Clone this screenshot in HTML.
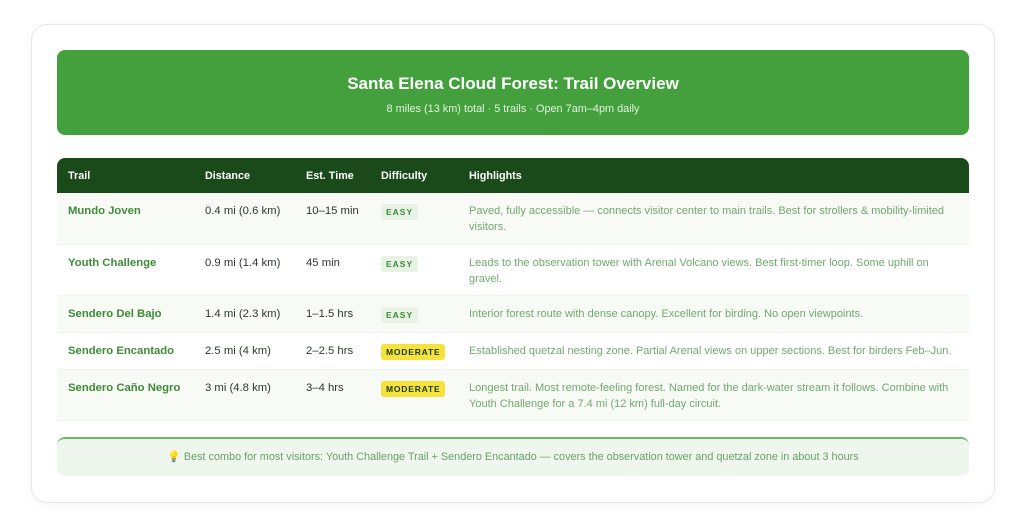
<!DOCTYPE html>
<html><head><meta charset="utf-8"><style>
*{margin:0;padding:0;box-sizing:border-box}
body{width:1024px;height:528px;background:#fff;font-family:"Liberation Sans",sans-serif;position:relative;overflow:hidden}
.card{position:absolute;left:31px;top:24px;width:964px;height:479px;border:1px solid #e4ece2;border-radius:16px;background:#fff;box-shadow:0 2px 10px rgba(0,0,0,.04)}
.hero{position:absolute;left:57px;top:50px;width:912px;height:85px;background:#43a03d;border-radius:8px;color:#fff;text-align:center}
.hero h1{font-size:17px;font-weight:bold;margin-top:24px}
.hero p{font-size:10.9px;margin-top:9px;color:#e3f3df}
.th{position:absolute;left:57px;top:158px;width:912px;height:35px;background:#1b4a1a;border-radius:8px 8px 0 0;color:#fff;font-size:10.8px;font-weight:bold}
.c{position:absolute}
.row{position:absolute;left:57px;width:912px;border-bottom:1px solid #eef3ec;font-size:11.3px}
.alt{background:#f7faf5}
.name{color:#3d8b37;font-weight:bold}
.dk{color:#2a3a2a}
.hl{color:#72a870;font-size:11px;line-height:16px;width:485px}
.b{position:absolute;left:324px;font-size:8.5px;font-weight:bold;letter-spacing:1px;padding:3px 5px;border-radius:3px}
.easy{background:#e8f3e6;color:#3d8b37}
.mod{background:#f5e33c;color:#1b3a1a;letter-spacing:.8px}
.foot{position:absolute;left:57px;top:437px;width:912px;height:39px;background:#eff6ed;border-top:2px solid #6bb865;border-radius:8px;text-align:center;font-size:10.85px;color:#6aa168;line-height:37px}
</style></head><body>
<div class="card"></div>
<div class="hero"><h1>Santa Elena Cloud Forest: Trail Overview</h1><p>8 miles (13 km) total · 5 trails · Open 7am–4pm daily</p></div>
<div class="th">
<span class="c" style="left:11px;top:12px">Trail</span>
<span class="c" style="left:148px;top:12px">Distance</span>
<span class="c" style="left:249px;top:12px">Est. Time</span>
<span class="c" style="left:324px;top:12px">Difficulty</span>
<span class="c" style="left:412px;top:12px">Highlights</span>
</div>

<div class="row alt" style="top:193px;height:52px">
<span class="c name" style="left:11px;top:12px">Mundo Joven</span>
<span class="c dk" style="left:148px;top:12px">0.4 mi (0.6 km)</span>
<span class="c dk" style="left:249px;top:12px">10–15 min</span>
<span class="b easy" style="top:11px">EASY</span>
<span class="c hl" style="left:412px;top:10px">Paved, fully accessible — connects visitor center to main trails. Best for strollers &amp; mobility-limited visitors.</span>
</div>
<div class="row" style="top:245px;height:51px">
<span class="c name" style="left:11px;top:12px">Youth Challenge</span>
<span class="c dk" style="left:148px;top:12px">0.9 mi (1.4 km)</span>
<span class="c dk" style="left:249px;top:12px">45 min</span>
<span class="b easy" style="top:11px">EASY</span>
<span class="c hl" style="left:412px;top:10px">Leads to the observation tower with Arenal Volcano views. Best first-timer loop. Some uphill on gravel.</span>
</div>
<div class="row alt" style="top:296px;height:37px">
<span class="c name" style="left:11px;top:12px">Sendero Del Bajo</span>
<span class="c dk" style="left:148px;top:12px">1.4 mi (2.3 km)</span>
<span class="c dk" style="left:249px;top:12px">1–1.5 hrs</span>
<span class="b easy" style="top:11px">EASY</span>
<span class="c hl" style="left:412px;top:10px">Interior forest route with dense canopy. Excellent for birding. No open viewpoints.</span>
</div>
<div class="row" style="top:333px;height:37px">
<span class="c name" style="left:11px;top:12px">Sendero Encantado</span>
<span class="c dk" style="left:148px;top:12px">2.5 mi (4 km)</span>
<span class="c dk" style="left:249px;top:12px">2–2.5 hrs</span>
<span class="b mod" style="top:11px">MODERATE</span>
<span class="c hl" style="left:412px;top:10px;width:500px">Established quetzal nesting zone. Partial Arenal views on upper sections. Best for birders Feb–Jun.</span>
</div>
<div class="row alt" style="top:370px;height:51px">
<span class="c name" style="left:11px;top:12px">Sendero Caño Negro</span>
<span class="c dk" style="left:148px;top:12px">3 mi (4.8 km)</span>
<span class="c dk" style="left:249px;top:12px">3–4 hrs</span>
<span class="b mod" style="top:11px">MODERATE</span>
<span class="c hl" style="left:412px;top:10px">Longest trail. Most remote-feeling forest. Named for the dark-water stream it follows. Combine with Youth Challenge for a 7.4 mi (12 km) full-day circuit.</span>
</div>
<div class="foot">💡 Best combo for most visitors: Youth Challenge Trail + Sendero Encantado — covers the observation tower and quetzal zone in about 3 hours</div>
</body></html>
